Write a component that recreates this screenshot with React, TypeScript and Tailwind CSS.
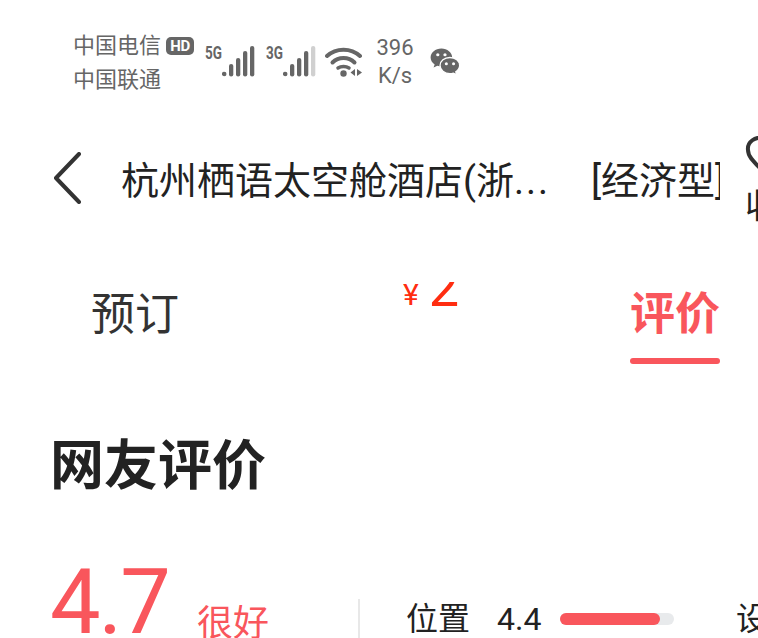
import React from 'react';

const cjk = { fontFamily: '"Roboto", "Noto Sans CJK SC", sans-serif' };

const SignalBars: React.FC<{ lastOff?: boolean }> = ({ lastOff }) => (
  <svg width="33" height="31" viewBox="0 0 33 31" className="block">
    <circle cx="2.200" cy="28" r="2.300" fill="#666" />
    <rect x="7" y="18" width="4.300" height="12.500" rx="2.100" fill="#666" />
    <rect x="14" y="12" width="4.300" height="18.500" rx="2.100" fill="#666" />
    <rect x="21" y="5" width="4.300" height="25.500" rx="2.100" fill="#666" />
    <rect x="28" y="0" width="4.300" height="30.500" rx="2.100" fill={lastOff ? '#d0d0d0' : '#666'} />
  </svg>
);

const WifiIcon: React.FC = () => (
  <svg width="38" height="32" viewBox="0 0 38 32" className="block">
    <path d="M2 11C11 2.500 26 2.500 35 11" fill="none" stroke="#666" strokeWidth="4" strokeLinecap="round" />
    <path d="M7.500 17.500C13.500 11.500 23.500 11.500 29.500 17.500" fill="none" stroke="#666" strokeWidth="4" strokeLinecap="round" />
    <path d="M13 23C16 21 21 21 24 23" fill="none" stroke="#666" strokeWidth="3.500" strokeLinecap="round" />
    <circle cx="18.500" cy="28.500" r="3.200" fill="#666" />
    <path d="M30 24V31L25.500 27.500Z" fill="#666" />
    <path d="M32 24V31L37 27.500Z" fill="#666" />
  </svg>
);

const WechatIcon: React.FC = () => (
  <svg width="32" height="27" viewBox="0 0 33 30" className="block">
    <path d="M12.500 0.500C5.800 0.500 0.500 5 0.500 10.500C0.500 13.700 2.300 16.400 5 18.200L3.800 21.800L8 19.700C9.500 20.200 10.900 20.400 12.500 20.400C19 20.400 24.500 16 24.500 10.500C24.500 5 19 0.500 12.500 0.500Z" fill="#666" />
    <path d="M22 10.500C15.800 10.500 11 14.500 11 19.500C11 24.500 15.800 28.500 22 28.500C23.300 28.500 24.600 28.300 25.800 27.900L29.500 29.800L28.500 26.500C31 24.800 32.800 22.300 32.800 19.500C32.800 14.500 28 10.500 22 10.500Z" fill="#666" stroke="#fff" strokeWidth="1.500" />
    <circle cx="8.500" cy="7.500" r="1.800" fill="#fff" />
    <circle cx="16.500" cy="7.500" r="1.800" fill="#fff" />
    <circle cx="18" cy="17.500" r="1.700" fill="#fff" />
    <circle cx="26" cy="17.500" r="1.700" fill="#fff" />
  </svg>
);

const App: React.FC = () => {
  return (
    <div className="w-[758px] h-[638px] overflow-hidden bg-white" style={cjk}>
      {/* status bar */}
      <div className="flex items-start h-[130px] pl-[73px] pt-[30px] text-[#666]">
        <div className="w-[132px] text-[22px] leading-[32px]">
          <div className="flex items-center">
            <span>中国电信</span>
            <span className="ml-[5px] w-[28px] h-[18px] rounded-[5px] bg-[#666] text-white text-[15px] leading-[18px] font-bold text-center tracking-[-0.5px]">HD</span>
          </div>
          <div className="mt-[2px]">中国联通</div>
        </div>
        <div className="flex items-start mt-[16px]">
          <span className="w-[17px] text-[18px] leading-[18px] -mt-[2px] font-bold scale-x-75 origin-left">5G</span>
          <SignalBars />
          <span className="ml-[11px] w-[17px] text-[18px] leading-[18px] -mt-[2px] font-bold scale-x-75 origin-left">3G</span>
          <SignalBars lastOff />
        </div>
        <div className="ml-[9px] mt-[15px]">
          <WifiIcon />
        </div>
        <div className="ml-[12px] w-[40px] text-[22px] leading-[28px] text-center mt-[4px]">
          <div>396</div>
          <div>K/s</div>
        </div>
        <div className="ml-[14px] mt-[18px]">
          <WechatIcon />
        </div>
      </div>

      {/* nav row */}
      <div className="flex items-start h-[152px] text-[#222]">
        <svg width="28" height="52" viewBox="0 0 28 52" className="ml-[53px] mt-[22px] shrink-0">
          <path d="M26 2L3 26L26 50" fill="none" stroke="#333" strokeWidth="4" strokeLinecap="round" strokeLinejoin="round" />
        </svg>
        <div className="ml-[40px] w-[430px] shrink-0 overflow-hidden whitespace-nowrap text-[38px] leading-[50px] mt-[26px]">
          杭州栖语太空舱酒店(浙<span className="tracking-[2px]">...</span>
        </div>
        <div className="ml-[40px] w-[129px] shrink-0 overflow-hidden whitespace-nowrap text-[38px] leading-[50px] mt-[26px]">
          [经济型]
        </div>
        <div className="ml-[25px] w-[40px] shrink-0 flex flex-col items-start">
          <svg width="40" height="36" viewBox="0 0 40 36" className="mt-[6px] shrink-0">
            <path d="M20 2C10 0 2 6 3 14C3 20 8 25 14 31" fill="none" stroke="#333" strokeWidth="4" strokeLinecap="round" />
          </svg>
          <div className="text-[34px] leading-[42px] mt-[13px] whitespace-nowrap">收藏</div>
        </div>
      </div>

      {/* tabs */}
      <div className="flex items-start h-[80px]">
        <div className="ml-[91px] w-[90px] text-[44px] leading-[60px] mt-[3px] text-[#333]">预订</div>
        <div className="ml-[222px] w-[70px] h-[24px] overflow-hidden flex items-end text-[#ff2d11]">
          <span className="text-[30px] leading-[22px] mr-[10px]">¥</span>
          <span className="text-[54px] leading-[36px]">2</span>
        </div>
        <div className="ml-[157px] w-[90px] flex flex-col">
          <span className="text-[45px] leading-[60px] mt-[3px] font-bold text-[#f9565c] whitespace-nowrap">评价</span>
          <span className="mt-[13px] h-[6px] rounded-full bg-[#f9565c]" />
        </div>
      </div>

      {/* heading */}
      <div className="pl-[50px] mt-[70px] h-[70px] text-[54px] leading-[70px] font-bold text-[#222]">网友评价</div>

      {/* rating */}
      <div className="flex items-start mt-[72px] pl-[50px]">
        <div className="w-[147px] shrink-0 text-[90px] leading-[90px] -mt-[16px] tracking-[-2px] text-[#f9565c] whitespace-nowrap">4.7</div>
        <div className="text-[36px] leading-[44px] mt-[28px] shrink-0 text-[#f9565c] whitespace-nowrap">很好</div>
        <div className="ml-[89px] w-[2px] h-[60px] mt-[25px] shrink-0 bg-[#e8e8e8]" />
        <div className="ml-[46px] mt-[25px] flex items-center text-[32px] leading-[40px] text-[#222] shrink-0">
          <span className="w-[91px]">位置</span>
          <span className="w-[63px]">4.4</span>
          <div className="w-[114px] h-[12px] rounded-full bg-[#e8eaec]">
            <div className="w-[100px] h-[12px] rounded-full bg-[#f9565c]" />
          </div>
          <span className="ml-[62px] whitespace-nowrap">设施</span>
        </div>
      </div>
    </div>
  );
};

export default App;
